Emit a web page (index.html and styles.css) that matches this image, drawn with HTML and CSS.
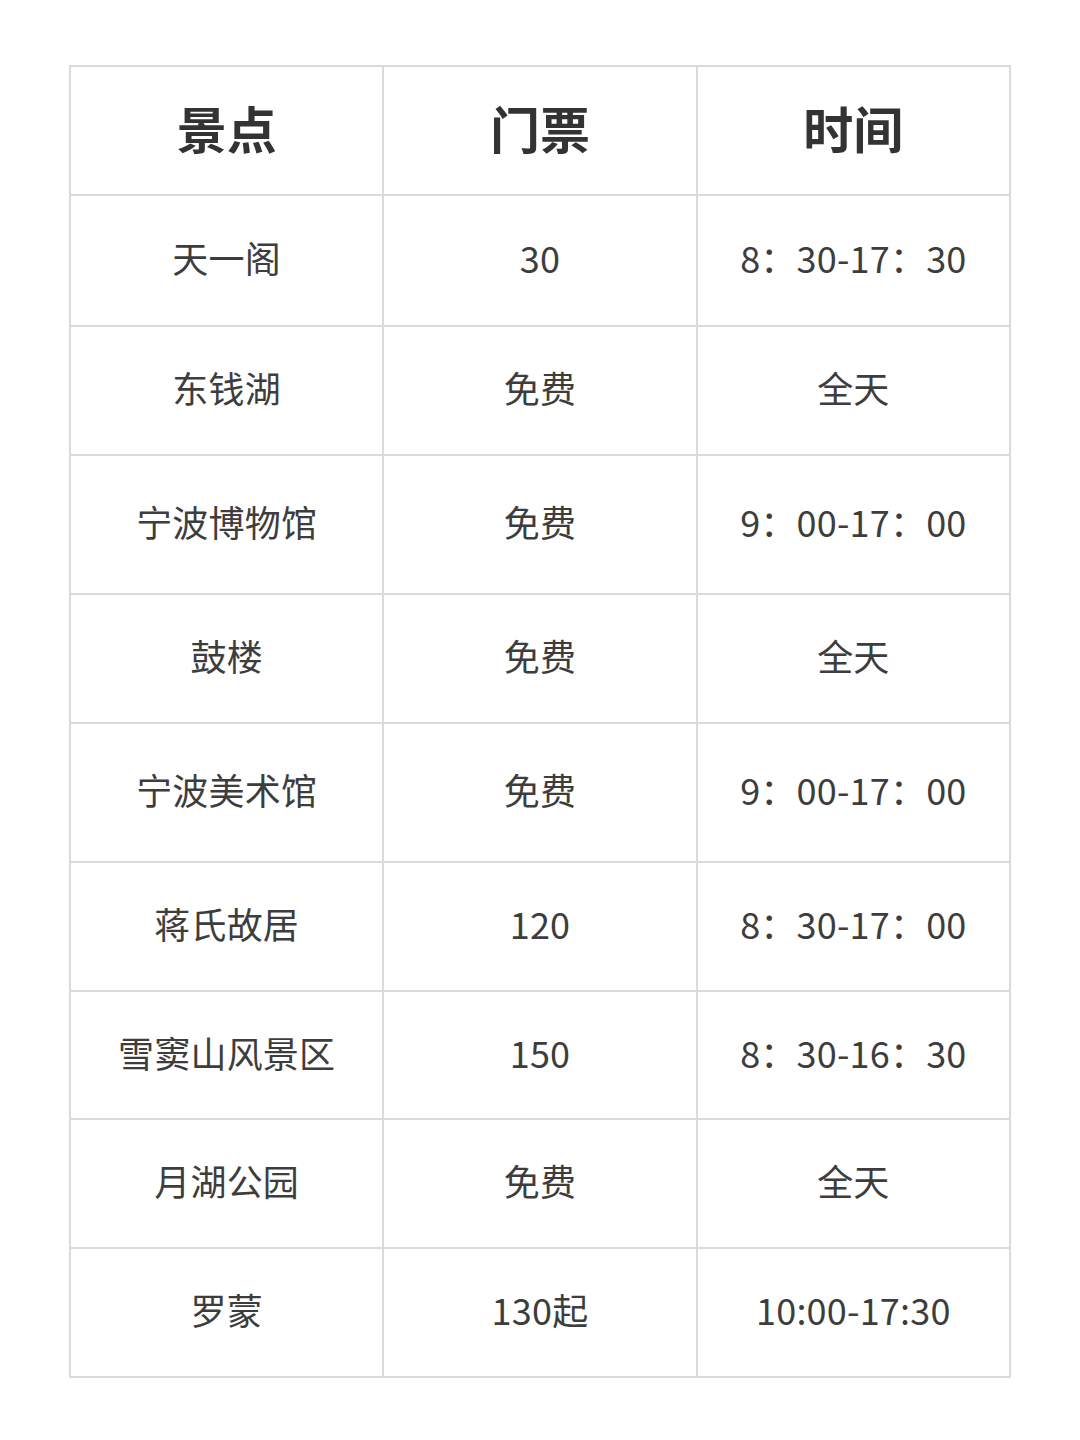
FILE: index.html
```html
<!DOCTYPE html>
<html lang="zh">
<head>
<meta charset="utf-8">
<link rel="stylesheet" href="styles.css">
</head>
<body>
<div class="page">
<table class="tbl">
<thead>
<tr class="r-head"><th>景点</th><th>门票</th><th>时间</th></tr>
</thead>
<tbody>
<tr class="r131"><td>天一阁</td><td>30</td><td>8：30-17：30</td></tr>
<tr class="r129"><td>东钱湖</td><td>免费</td><td>全天</td></tr>
<tr class="r139"><td>宁波博物馆</td><td>免费</td><td>9：00-17：00</td></tr>
<tr class="r129"><td>鼓楼</td><td>免费</td><td>全天</td></tr>
<tr class="r139"><td>宁波美术馆</td><td>免费</td><td>9：00-17：00</td></tr>
<tr class="r129"><td>蒋氏故居</td><td>120</td><td>8：30-17：00</td></tr>
<tr class="r128"><td>雪窦山风景区</td><td>150</td><td>8：30-16：30</td></tr>
<tr class="r129"><td>月湖公园</td><td>免费</td><td>全天</td></tr>
<tr class="r129"><td>罗蒙</td><td>130起</td><td>10:00-17:30</td></tr>
</tbody>
</table>
</div>
</body>
</html>
```
FILE: styles.css
```css
html, body {
  margin: 0;
  padding: 0;
  background: #ffffff;
}
.page {
  padding: 65px 0 0 69px;
}
.tbl {
  border-collapse: collapse;
  width: 942px;
  table-layout: fixed;
  font-family: "Noto Sans CJK SC", "Noto Sans", sans-serif;
  color: #3d3d3d;
}
.tbl th, .tbl td {
  border: 2px solid #dadada;
  text-align: center;
  vertical-align: middle;
  padding: 0 0 7px 0;
}
.tbl th {
  font-size: 50px;
  font-weight: 700;
  color: #333333;
}
.tbl td {
  font-size: 36px;
  font-weight: 400;
  letter-spacing: 0.2px;
}
.r-head { height: 129px; }
.r131 { height: 131px; }
.r129 { height: 129px; }
.r128 { height: 128px; }
.r139 { height: 139px; }
```
